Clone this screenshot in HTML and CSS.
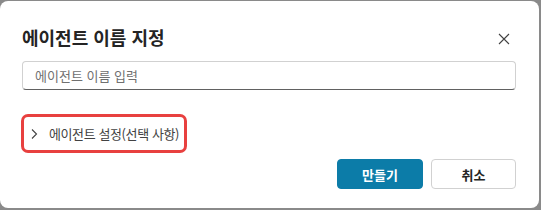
FILE: index.html
```html
<!DOCTYPE html>
<html lang="ko">

<head>
    <meta charset="UTF-8">
    <meta name="viewport" content="width=device-width, initial-scale=1.0">
    <title>에이전트 이름 지정</title>
    <link rel="stylesheet" href="styles.css">
</head>

<body>
    <div class="dialog">
        <div class="head">
            <h1 class="title">에이전트 이름 지정</h1>
            <span class="close">
                <svg width="12" height="12" viewBox="0 0 12 12">
                    <path d="M1 1 L11 11 M11 1 L1 11" stroke="#424242" stroke-width="1.1" fill="none" />
                </svg>
            </span>
        </div>
        <input class="name" type="text" placeholder="에이전트 이름 입력">
        <div class="expander">
            <svg width="8" height="12" viewBox="0 0 8 12">
                <path d="M2 1.5 L6.5 6 L2 10.5" stroke="#424242" stroke-width="1.1" fill="none" />
            </svg>
            <span>에이전트 설정(선택 사항)</span>
        </div>
        <div class="actions">
            <span class="btn primary">만들기</span>
            <span class="btn">취소</span>
        </div>
    </div>
</body>

</html>
```

FILE: styles.css
```css
* {
    margin: 0;
    padding: 0;
    box-sizing: border-box;
}

body {
    background-color: #8a8a8a;
    font-family: "Noto Sans CJK KR", "Noto Sans", sans-serif;
    color: #242424;
}

.dialog {
    width: 539px;
    height: 207px;
    margin-top: 1px;
    background-color: #fff;
    border-radius: 8px;
    padding: 24px 23px 0 22px;
}

.head {
    height: 24px;
    display: flex;
    align-items: center;
    justify-content: space-between;
}

.title {
    font-size: 18px;
    font-weight: 700;
    line-height: 24px;
}

.close {
    width: 24px;
    height: 24px;
    display: flex;
    align-items: center;
    justify-content: center;
    margin-top: 3px;
}

.name {
    display: block;
    width: 100%;
    height: 29px;
    margin-top: 12px;
    border: 1px solid #d1d1d1;
    border-bottom-color: #616161;
    border-radius: 4px;
    padding: 0 12px;
    font-family: inherit;
    font-size: 13px;
    outline: none;
}

.name::placeholder {
    color: #707070;
}

.expander {
    width: 166px;
    height: 39px;
    margin-top: 24px;
    margin-left: -1px;
    border: 3px solid #e8403f;
    border-radius: 7px;
    display: flex;
    align-items: center;
    gap: 11px;
    padding-left: 6px;
    font-size: 13px;
    letter-spacing: -0.4px;
    white-space: nowrap;
    color: #424242;
}

.actions {
    display: flex;
    justify-content: flex-end;
    gap: 8px;
    margin-top: 6px;
}

.btn {
    width: 85px;
    height: 30px;
    border: 1px solid #d1d1d1;
    border-radius: 4px;
    display: flex;
    align-items: center;
    justify-content: center;
    font-size: 13px;
    font-weight: 700;
    color: #242424;
    background-color: #fff;
}

.btn.primary {
    width: 86px;
    background-color: #0c7ca8;
    border-color: #0c7ca8;
    color: #fff;
}
```
